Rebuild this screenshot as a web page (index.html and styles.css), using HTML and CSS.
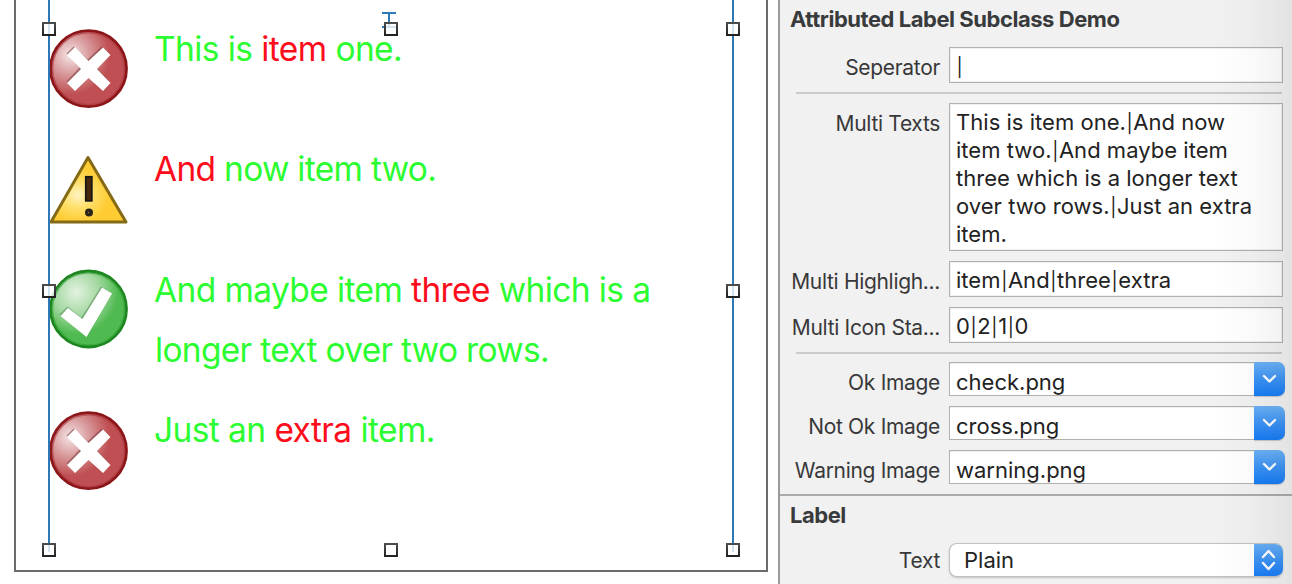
FILE: index.html
```html
<!DOCTYPE html>
<html lang="en">
<head>
<meta charset="utf-8">
<title>Attributed Label Subclass Demo</title>
<link rel="stylesheet" href="styles.css">
</head>
<body>
<svg class="defs" width="0" height="0">
  <defs>
    <radialGradient id="redFill" cx="0.26" cy="0.32" r="0.52"><stop offset="0" stop-color="#f4e6e6"/><stop offset="0.45" stop-color="#dba0a2"/><stop offset="1" stop-color="#bf4f52"/></radialGradient>
    <radialGradient id="greenFill" cx="0.34" cy="0.28" r="0.55"><stop offset="0" stop-color="#e2f3e0"/><stop offset="0.55" stop-color="#a4d8a2"/><stop offset="1" stop-color="#4fba50"/></radialGradient>
    <radialGradient id="yellowFill" cx="0.36" cy="0.58" r="0.42"><stop offset="0" stop-color="#fff3c4"/><stop offset="0.5" stop-color="#ffdf68"/><stop offset="1" stop-color="#ffcc33"/></radialGradient>
    <symbol id="cross" viewBox="0 0 80 80">
      <circle cx="39.5" cy="39.7" r="38" fill="url(#redFill)" stroke="#8c1519" stroke-width="2.8"/>
      <circle cx="39.5" cy="39.7" r="36" fill="none" stroke="#a8363a" stroke-width="1.6" opacity="0.6"/>
      <path d="M18 25 25 18 39 31 53 18 61 25 48 39 61 53 53 61 39 48 25 61 18 53 31 39Z" fill="#7d3d40" opacity="0.6" transform="translate(-0.5 -0.6)"/>
      <path d="M18 26 26 18 39.500 32 54 18.500 61.500 26 48 40 61.500 54 54 62 39.500 49 26 62 18 54 32 40Z" fill="#fff"/>
    </symbol>
    <symbol id="check" viewBox="0 0 80 80">
      <circle cx="39.500" cy="40" r="38" fill="url(#greenFill)" stroke="#1d861f" stroke-width="2.800"/>
      <circle cx="39.500" cy="40" r="36" fill="none" stroke="#32a034" stroke-width="1.600" opacity="0.6"/>
      <path d="M11 46 19 38 33 49 52.500 18 62 24 37 67Z" fill="#5c8f5b" opacity="0.6" transform="translate(-0.6 -0.6)"/>
      <path d="M11.500 47 19 39 33.500 50 53 18.500 63 24.500 37.500 68Z" fill="#fff"/>
    </symbol>
    <symbol id="warning" viewBox="0 0 80 70">
      <path d="M39 2.500 77 67H2Z" fill="url(#yellowFill)" stroke="#856a16" stroke-width="3" stroke-linejoin="round"/>
      <rect x="36.800" y="21.800" width="6" height="24" fill="#46260c" stroke="#191713" stroke-width="1.800"/>
      <circle cx="40" cy="57.500" r="4" fill="#29231a"/><circle cx="39.500" cy="57.500" r="0.700" fill="#8b7434"/>
    </symbol>
    <linearGradient id="handleStroke" x1="0" y1="0" x2="0" y2="1"><stop offset="0" stop-color="#4c4c4c"/><stop offset="1" stop-color="#222"/></linearGradient>
    <symbol id="handle" viewBox="0 0 14 14"><rect x="1" y="1" width="12" height="12" fill="#fff" fill-opacity="0.8" stroke="url(#handleStroke)" stroke-width="2"/></symbol>
    <symbol id="chevron" viewBox="0 0 31 34"><path d="M10 14 15.500 19.500 21 14" fill="none" stroke="#fff" stroke-width="2.400" stroke-linecap="round" stroke-linejoin="round"/></symbol>
  </defs>
</svg>
<div class="app">
  <main class="canvas">
    <ul class="items">
      <li class="item"><svg class="status"><use href="#cross"/></svg><p class="text t1">This is <em>item</em> one.</p></li>
      <li class="item second"><svg class="status warn"><use href="#warning"/></svg><p class="text t2"><em>And</em> now item two.</p></li>
      <li class="item third"><svg class="status ok"><use href="#check"/></svg><p class="text t3">And maybe item <em>three</em> which is a<br><span class="line2">longer text over two rows.</span></p></li>
      <li class="item fourth"><svg class="status last"><use href="#cross"/></svg><p class="text t4">Just an <em>extra</em> item.</p></li>
    </ul>
    <svg class="selection" viewBox="0 0 780 584">
      <path d="M49 0V552M733 0V552M382 13H396M389 13V27M382 27H396" fill="none" stroke="#2e78b7" stroke-width="2"/>
      <g>
        <use href="#handle" x="42" y="22" width="14" height="14"/><use href="#handle" x="384" y="22" width="14" height="14"/><use href="#handle" x="726" y="22" width="14" height="14"/>
        <use href="#handle" x="42" y="284" width="14" height="14"/><use href="#handle" x="726" y="284" width="14" height="14"/>
        <use href="#handle" x="42" y="543" width="14" height="14"/><use href="#handle" x="384" y="543" width="14" height="14"/><use href="#handle" x="726" y="543" width="14" height="14"/>
      </g>
    </svg>
  </main>
  <aside class="inspector">
    <h2 class="heading h-demo">Attributed Label Subclass Demo</h2>
    <div class="row"><span class="label">Seperator</span><div class="field"><i>|</i></div></div>
    <hr class="rule">
    <div class="row"><span class="label">Multi Texts</span><div class="field area">This is item one.<i>|</i>And now<br>item two.<i>|</i>And maybe item<br>three which is a longer text<br>over two rows.<i>|</i>Just an extra<br>item.</div></div>
    <div class="row"><span class="label">Multi Highligh...</span><div class="field">item<i>|</i>And<i>|</i>three<i>|</i>extra</div></div>
    <div class="row"><span class="label">Multi Icon Sta...</span><div class="field">0<i>|</i>2<i>|</i>1<i>|</i>0</div></div>
    <hr class="rule tight">
    <div class="row"><span class="label">Ok Image</span><div class="combo"><span class="value">check.png</span><svg class="drop"><use href="#chevron"/></svg></div></div>
    <div class="row"><span class="label">Not Ok Image</span><div class="combo"><span class="value">cross.png</span><svg class="drop"><use href="#chevron"/></svg></div></div>
    <div class="row"><span class="label">Warning Image</span><div class="combo"><span class="value">warning.png</span><svg class="drop"><use href="#chevron"/></svg></div></div>
    <hr class="divider">
    <h2 class="heading h-label">Label</h2>
    <div class="row"><span class="label centered">Text</span><div class="popup"><span class="choice">Plain</span><svg class="stepper" viewBox="0 0 29 34"><path d="M9 14 14.500 8 20 14M9 20 14.500 26 20 20" fill="none" stroke="#fff" stroke-width="2.400" stroke-linecap="round" stroke-linejoin="round"/></svg></div></div>
    <div class="shade"></div>
  </aside>
</div>
</body>
</html>
```
FILE: styles.css
```css
* { box-sizing: border-box; }
body { margin: 0; font-family: Inter, "Liberation Sans", sans-serif; background: #fff; overflow: hidden; }
.defs { position: absolute; }
.app { display: grid; grid-template-columns: 778px 514px; height: 584px; }

.canvas { position: relative; padding-left: 14px; }
.items { margin: 0; width: 754px; height: 572px; padding: 19px 0 0 33px; list-style: none; border: 2px solid #6b6b6b; border-top: 0; }
.item { display: flex; height: 120px; gap: 25px; }
.item.second { height: 121px; }
.item.third { height: 140px; }
.status { width: 80px; height: 80px; margin-top: 10px; flex: none; }
.status.warn { height: 70px; margin-top: 16px; }
.status.ok { margin-top: 9px; }
.status.last { margin-top: 11px; }
.text { margin: 0; font-size: 33.5px; line-height: 60px; color: #2bfd31; white-space: nowrap; letter-spacing: -0.58px; }
.t2 { letter-spacing: -0.7px; }
.t3 { letter-spacing: -0.6px; }
.line2 { padding-left: 1px; letter-spacing: -0.7px; }
.text em { font-style: normal; color: #fd0d1b; }
.selection { position: absolute; left: 0; top: 0; width: 780px; height: 584px; }

.inspector { position: relative; background: #f1f1f1; border-left: 2px solid #999; }
.heading { margin: 0; padding: 6px 0 0 10px; height: 47px; font-size: 22px; font-weight: 700; line-height: 26px; color: #383a3c; letter-spacing: -0.46px; white-space: nowrap; }
.row { display: grid; grid-template-columns: 160px 1fr; column-gap: 9px; padding-right: 9px; margin-bottom: 10px; }
.row:has(.combo) { padding-right: 7px; }
.label { font-size: 21px; line-height: 41px; color: #38383a; text-align: right; white-space: nowrap; letter-spacing: -0.32px; height: 34px; }
.label.centered { line-height: 36px; }
.field { height: 36px; padding: 4px 6px; border: 1px solid #b0b0b0; background: #fff; box-shadow: inset 0 0 0 1px #f0f0f0; font-size: 22px; line-height: 28px; color: #222; white-space: nowrap; letter-spacing: 0.03px; }
.field i { font-style: normal; font-size: 18.5px; line-height: 1; padding: 0 0.6px; }
.field.area { height: 148px; }
.rule { margin: -1px 10px 9px 16px; height: 2px; border: 0; background: #cacaca; }
.rule.tight { margin-bottom: 8px; }
.combo { display: flex; height: 34px; }
.value { flex: 1; border: 1px solid #b0b0b0; border-right: 0; background: #fff; box-shadow: inset 0 1px #f0f0f0; padding-left: 6px; font-size: 22px; line-height: 39px; color: #222; }
.drop { width: 31px; height: 34px; background: linear-gradient(#6cb1f5, #3d93f4 50%, #167bf5); border-radius: 0 7px 7px 0; box-shadow: 0 1px 1px #0003; }
.divider { margin: 0; height: 2px; border: 0; background: #ababab; }
.popup { display: flex; height: 34px; border-radius: 8px; background: #fff; box-shadow: 0 1px 2px #0003; overflow: hidden; border: 1px solid #c2c2c2; border-right: 0; }
.choice { flex: 1; padding-left: 14px; font-size: 22px; line-height: 32px; color: #222; }
.stepper { width: 29px; height: 34px; margin-top: -1px; background: linear-gradient(#6cb1f5, #3d93f4 50%, #167bf5); }
.shade { position: absolute; top: 0; right: 0; width: 80px; height: 100%; background: linear-gradient(90deg, #0000, #00000005 50%, #0000000f); pointer-events: none; }
```
